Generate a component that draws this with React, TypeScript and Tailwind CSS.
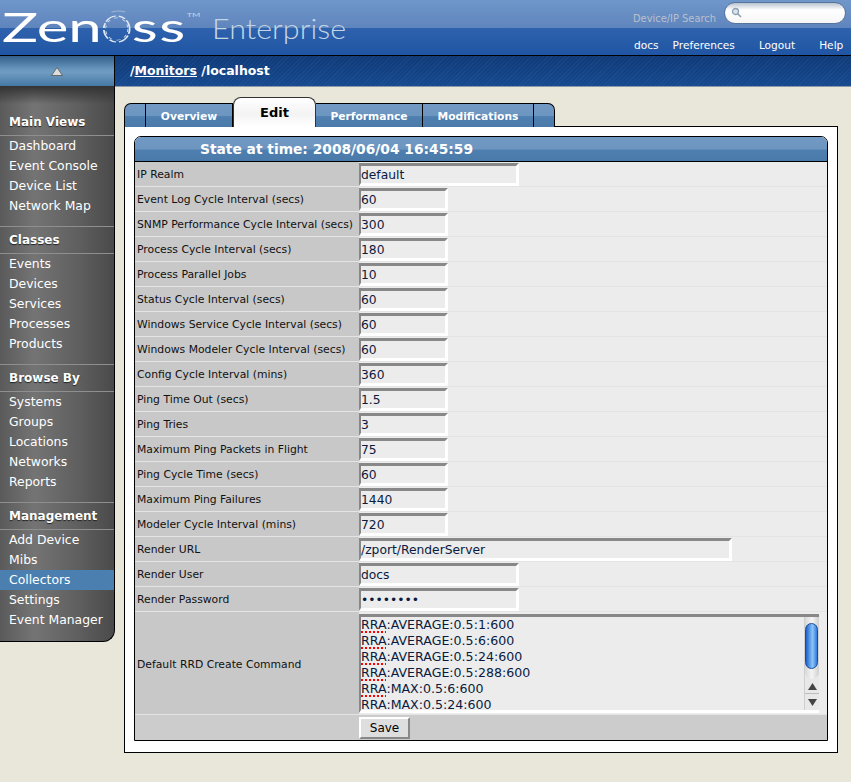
import React from "react";

const F = "font-['DejaVu_Sans',sans-serif]";

const nav: [string, string[]][] = [
  ["Main Views", ["Dashboard", "Event Console", "Device List", "Network Map"]],
  ["Classes", ["Events", "Devices", "Services", "Processes", "Products"]],
  ["Browse By", ["Systems", "Groups", "Locations", "Networks", "Reports"]],
  ["Management", ["Add Device", "Mibs", "Collectors", "Settings", "Event Manager"]],
];

const rows: [string, string, string][] = [
  ["IP Realm", "default", "w-[160px]"],
  ["Event Log Cycle Interval (secs)", "60", "w-[89px]"],
  ["SNMP Performance Cycle Interval (secs)", "300", "w-[89px]"],
  ["Process Cycle Interval (secs)", "180", "w-[89px]"],
  ["Process Parallel Jobs", "10", "w-[89px]"],
  ["Status Cycle Interval (secs)", "60", "w-[89px]"],
  ["Windows Service Cycle Interval (secs)", "60", "w-[89px]"],
  ["Windows Modeler Cycle Interval (secs)", "60", "w-[89px]"],
  ["Config Cycle Interval (mins)", "360", "w-[89px]"],
  ["Ping Time Out (secs)", "1.5", "w-[89px]"],
  ["Ping Tries", "3", "w-[89px]"],
  ["Maximum Ping Packets in Flight", "75", "w-[89px]"],
  ["Ping Cycle Time (secs)", "60", "w-[89px]"],
  ["Maximum Ping Failures", "1440", "w-[89px]"],
  ["Modeler Cycle Interval (mins)", "720", "w-[89px]"],
  ["Render URL", "/zport/RenderServer", "w-[373px]"],
  ["Render User", "docs", "w-[160px]"],
  ["Render Password", "........", "w-[160px]"],
];

const rrd = [":AVERAGE:0.5:1:600", ":AVERAGE:0.5:6:600", ":AVERAGE:0.5:24:600", ":AVERAGE:0.5:288:600", ":MAX:0.5:6:600", ":MAX:0.5:24:600"];

const tabBg = "bg-[linear-gradient(#7199c4_0%,#6c95c0_50%,#4e7fb0_55%,#4a7aaa_100%)]";

function Tab({ label, w, round }: { label?: string; w: string; round?: string }) {
  return (
    <div className={`${w} ${round ?? ""} h-[24px] ${tabBg} border-t border-r border-black flex items-center justify-center pt-[3px] text-white font-bold text-[10.7px]`}>
      {label}
    </div>
  );
}

function Logo() {
  return (
    <div className="flex items-start h-full pl-[2px]">
      <div className="flex items-center mt-[7px] h-[40px] w-[197px] font-['Lato',sans-serif] text-white text-[40px] font-normal leading-none scale-x-[1.5] origin-left">
        <span>Zen</span>
        <svg width="19" height="36" viewBox="0 0 19 36" className="mx-[0.5px] mt-[-1px] shrink-0" preserveAspectRatio="none">
          <ellipse cx="9.5" cy="20" rx="8.6" ry="13" fill="none" stroke="#dfe8f4" strokeWidth="1.2" strokeDasharray="5 1.5 9 2" />
          <ellipse cx="9.5" cy="20" rx="7.4" ry="11.2" fill="none" stroke="#c6d5e8" strokeWidth="0.7" strokeDasharray="3 3" />
          <path d="M6 3 Q11 1 15 3" stroke="#9fb6d4" strokeWidth="1.2" fill="none" />
        </svg>
        <span className="tracking-[1px]">ss</span>
        <span className="text-[6px] self-start mt-[5px] text-[#c5d3e6] font-normal">TM</span>
      </div>
      <div className="mt-[14px] ml-[13px] font-['Lato',sans-serif] font-light text-[#c4d6e4] text-[28px] leading-none scale-x-[1.09] origin-left">Enterprise</div>
    </div>
  );
}

function Scrollbar() {
  return (
    <div className="w-[15px] self-stretch flex flex-col bg-[#e8e8e8] border-l border-[#cfcfcf]">
      <div className="h-[62px] bg-[linear-gradient(90deg,#d8d8d8,#f4f4f4_50%,#cfcfcf)] rounded-b-[8px] pt-[6px]">
        <div className="h-[46px] w-[13px] rounded-[7px] border border-[#1c4d9c] bg-[linear-gradient(90deg,#1f5fc8,#6fb0f0_45%,#8cc4f8_60%,#2f78dc)]" />
      </div>
      <div className="flex-1" />
      <div className="h-[15px] flex items-center justify-center border-b border-[#bdbdbd]">
        <svg width="9" height="7" viewBox="0 0 9 7"><path d="M4.5 0 9 7H0z" fill="#444" /></svg>
      </div>
      <div className="h-[16px] flex items-center justify-center">
        <svg width="9" height="7" viewBox="0 0 9 7"><path d="M0 0h9L4.5 7z" fill="#444" /></svg>
      </div>
    </div>
  );
}

const inset = "border-[3px] border-l-2 border-t-[#888] border-l-[#888] border-r-white border-b-white bg-[#ececec]";

export default function App() {
  return (
    <div className={`w-[851px] h-[782px] overflow-hidden bg-[#e9e6da] ${F}`}>
      <header className="h-[56px] border-b border-black bg-[linear-gradient(#7097ca_0%,#5f85bd_50%,#2f62ad_51%,#1f55a4_100%)] flex justify-between">
        <Logo />
        <div className="w-[218px] shrink-0 flex flex-col">
          <div className="h-[28px] flex items-start">
            <span className="text-[#b9c0cc] text-[9.9px] leading-[12px] mt-[13px]">Device/IP Search</span>
            <div className="w-[122px] h-[22px] ml-[8px] mt-[2px] rounded-[11px] bg-[linear-gradient(#b9c3d0,#ffffff_35%,#f6f6f6)] border border-[#57749c] flex items-center pl-[6px]">
              <svg width="11" height="11" viewBox="0 0 11 11" className="-mt-[2px]"><circle cx="4.5" cy="4.5" r="3" fill="#dbe4ee" stroke="#8d9db2" strokeWidth="1.3" /><path d="M7 7l3 3" stroke="#8d9db2" strokeWidth="1.6" /></svg>
            </div>
          </div>
          <nav className="flex-1 flex items-center text-white text-[10.6px] pt-[9px]">
            <span className="ml-[1px]">docs</span>
            <span className="ml-[14px]">Preferences</span>
            <span className="ml-[24px]">Logout</span>
            <span className="ml-[24px]">Help</span>
          </nav>
        </div>
      </header>

      <div className="h-[31px] flex border-b border-[#8c98a8]">
        <div className="w-[115px] shrink-0 border-r border-black flex items-center justify-center bg-[linear-gradient(#335f8c,#6a97bd_45%,#6e9bc0_55%,#4678a5)]">
          <svg width="12" height="9" viewBox="0 0 12 9"><path d="M6 0.5 11.5 8.5H0.5z" fill="#ddd" stroke="#555" strokeWidth="0.8" /></svg>
        </div>
        <div className="flex-1 pl-[15px] pt-[1px] flex items-center text-white font-bold text-[12.5px] [background:repeating-linear-gradient(135deg,rgba(255,255,255,0.035)_0_1px,transparent_1px_3px),linear-gradient(#0f3a78,#16498f)]">
          /<span className="underline">Monitors</span>&nbsp;/localhost
        </div>
      </div>

      <div className="flex items-start">
        <aside className="w-[115px] h-[556px] shrink-0 -mt-[1px] border-r border-b border-black rounded-br-[12px] text-white text-[12.4px] pt-[26px] [background:linear-gradient(#333333,transparent_18px),linear-gradient(90deg,#5a5a5a_0%,#747474_30%,#5e5e5e_70%,#4a4a4a_100%)]">
          {nav.map(([title, items], i) => (
            <section key={title} className={i ? "mt-[10px] border-t border-[#8f8f8f] pt-[3px]" : ""}>
              <div className="h-[20px] px-[9px] font-bold text-[12px] leading-[20px] border-b border-[#8f8f8f] box-content pb-[3px] [text-shadow:0_1px_1px_#222]">{title}</div>
              <ul>
                {items.map((it) => (
                  <li key={it} className={`h-[20px] leading-[20px] px-[9px] ${it === "Collectors" ? "bg-[#4a7fb0]" : ""}`}>{it}</li>
                ))}
              </ul>
            </section>
          ))}
        </aside>

        <main className="flex-1 pl-[9px] pt-[10px]">
          <div className="flex items-end h-[30px] w-[431px] relative z-10 -mb-[1px]">
            <Tab w="w-[22px]" round="rounded-tl-[7px] border-l" />
            <Tab w="w-[87px]" label="Overview" />
            <div className="w-[83px] h-[30px] rounded-t-[8px] border border-b-0 border-[#333] bg-[linear-gradient(#ffffff,#f3f3f3_55%,#ffffff)] flex items-center justify-center font-bold text-[13px] text-black">Edit</div>
            <Tab w="w-[107px]" label="Performance" />
            <Tab w="w-[111px]" label="Modifications" />
            <Tab w="w-[21px]" round="rounded-tr-[7px]" />
          </div>
          <div className="w-[714px] h-[627px] border border-black bg-white p-[9px]">
            <div className="w-[694px] border border-black rounded-t-[7px] overflow-hidden">
              <div className={`h-[25px] ${tabBg} border-b border-black text-white font-bold text-[13.8px] flex items-center pl-[65px]`}>State at time: 2008/06/04 16:45:59</div>
              <div className="text-[10.8px] text-[#111] bg-[#c8c8c8]">
                {rows.map(([label, val, w]) => (
                  <div key={label} className="h-[25px] flex border-b border-[#e4e4e4]">
                    <div className="w-[224px] shrink-0 pl-[2px] pt-[3px] flex items-center">{label}</div>
                    <div className="flex-1 bg-[#ececec] flex items-center">
                      <input
                        readOnly
                        type={label === "Render Password" ? "password" : "text"}
                        value={val}
                        className={`${w} h-[23px] ${inset} pt-[1px] text-[12.3px] text-[#0a1a40] outline-none ${F}`}
                      />
                    </div>
                  </div>
                ))}
                <div className="h-[103px] flex border-b border-[#e4e4e4]">
                  <div className="w-[224px] shrink-0 pl-[2px] pt-[4px] flex items-center">Default RRD Create Command</div>
                  <div className="flex-1 bg-[#ececec] pt-[2px] pr-[8px]">
                    <div className={`h-[99px] ${inset} border-r-0 flex overflow-hidden`}>
                      <div className="flex-1 text-[12.6px] leading-[16px] text-[#0a1a40] whitespace-nowrap">
                        {rrd.map((r) => (
                          <div key={r}>
                            <span className="underline decoration-dotted decoration-[#ff0000] decoration-[1.5px] underline-offset-[2px]">RRA</span>{r}
                          </div>
                        ))}
                      </div>
                      <Scrollbar />
                    </div>
                  </div>
                </div>
                <div className="h-[25px] flex bg-[#cccccc]">
                  <div className="w-[224px] shrink-0" />
                  <div className="flex-1 pt-[2px]">
                    <button className={`w-[51px] h-[22px] border-2 border-t-white border-l-white border-r-[#888] border-b-[#888] bg-[#dedede] text-[12px] text-black ${F}`}>Save</button>
                  </div>
                </div>
              </div>
            </div>
          </div>
        </main>
      </div>
    </div>
  );
}
